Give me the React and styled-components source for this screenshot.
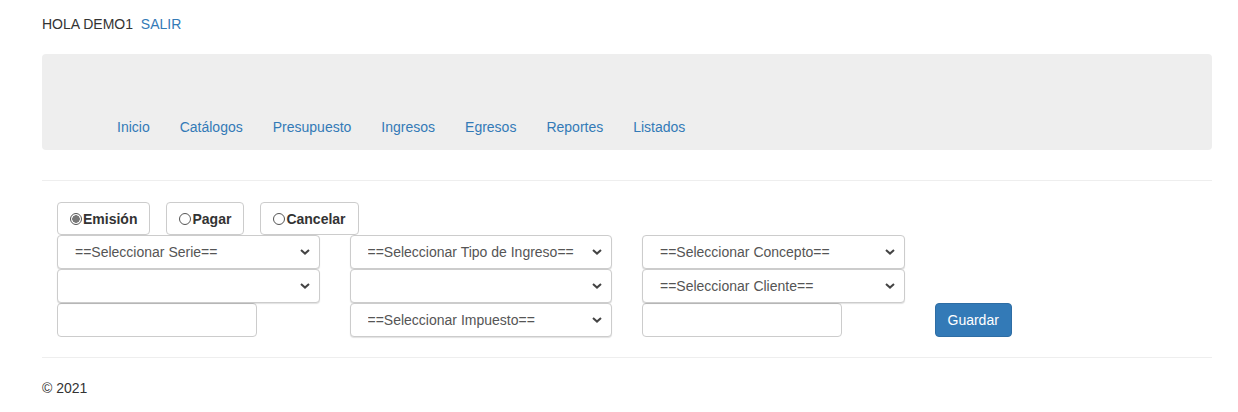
import styled, { createGlobalStyle } from "styled-components";

const GlobalStyle = createGlobalStyle`
  body {
    margin: 0;
    background: #fff;
    font-family: "Liberation Sans", Arial, Helvetica, sans-serif;
    font-size: 14px;
    line-height: 20px;
    color: #333;
  }
  a {
    color: #337ab7;
    text-decoration: none;
  }
`;

const navItems = ["Inicio", "Catálogos", "Presupuesto", "Ingresos", "Egresos", "Reportes", "Listados"];

function Chevron() {
  return (
    <ChevronIcon width="10" height="6" viewBox="0 0 10 6">
      <path d="M1 1l4 3.6L9 1" fill="none" stroke="#444" strokeWidth="2" />
    </ChevronIcon>
  );
}

function Select({ placeholder }) {
  return (
    <SelectWrap>
      <SelectBox defaultValue="">
        <option value="">{placeholder || ""}</option>
      </SelectBox>
      <Chevron />
    </SelectWrap>
  );
}

function App() {
  return (
    <>
      <GlobalStyle />
      <Container>
        <Greeting>
          HOLA DEMO1&nbsp; <a href="/">SALIR</a>
        </Greeting>

        <Navbar>
          <NavList>
            {navItems.map((item) => (
              <li key={item}>
                <a href="/">{item}</a>
              </li>
            ))}
          </NavList>
        </Navbar>

        <Rule />

        <Form>
          <RadioRow>
            <RadioButton>
              <RadioDot $checked />Emisión
            </RadioButton>
            <RadioButton>
              <RadioDot />Pagar
            </RadioButton>
            <RadioButton>
              <RadioDot />Cancelar
            </RadioButton>
          </RadioRow>

          <FieldGrid>
            <Select placeholder="==Seleccionar Serie==" />
            <Select placeholder="==Seleccionar Tipo de Ingreso==" />
            <Select placeholder="==Seleccionar Concepto==" />
            <span />

            <Select />
            <Select />
            <Select placeholder="==Seleccionar Cliente==" />
            <span />

            <TextInput type="text" />
            <Select placeholder="==Seleccionar Impuesto==" />
            <TextInput type="text" />
            <SaveButton type="button">Guardar</SaveButton>
          </FieldGrid>
        </Form>

        <FooterRule />
        <Footer>© 2021</Footer>
      </Container>
    </>
  );
}

export default App;

const Container = styled.div`
  width: 1170px;
  margin-left: 42px;
`;

const Greeting = styled.div`
  padding-top: 14px;
  line-height: 20px;
`;

const Navbar = styled.nav`
  margin-top: 20px;
  height: 96px;
  background: #eee;
  border-radius: 4px;
  box-sizing: border-box;
  padding-top: 48px;
`;

const NavList = styled.ul`
  display: flex;
  list-style: none;
  margin: 0;
  padding: 0 0 0 60px;
  li a {
    display: block;
    padding: 15px 15px 13px;
    line-height: 20px;
    color: #337ab7;
  }
`;

const Rule = styled.hr`
  margin: 30px 0 0;
  border: 0;
  border-top: 1px solid #eee;
`;

const Form = styled.form`
  padding: 21px 15px 0;
`;

const RadioRow = styled.div`
  display: flex;
  gap: 16px;
`;

const RadioButton = styled.label`
  display: inline-flex;
  align-items: center;
  height: 33px;
  box-sizing: border-box;
  padding: 1px 12px 0;
  border: 1px solid #ccc;
  border-radius: 4px;
  font-weight: bold;
  color: #333;
  background: #fff;
`;

const RadioDot = styled.span`
  width: 12px;
  height: 12px;
  box-sizing: border-box;
  border-radius: 50%;
  border: 1px solid #555;
  margin-right: 1px;
  background: ${(p) => (p.$checked ? "radial-gradient(circle, #777 0 3.5px, #fff 4px)" : "#fff")};
`;

const FieldGrid = styled.div`
  display: grid;
  grid-template-columns: repeat(4, 262.5px);
  grid-auto-rows: 34px;
  column-gap: 30px;
`;

const SelectWrap = styled.div`
  position: relative;
  height: 34px;
`;

const SelectBox = styled.select`
  appearance: none;
  width: 100%;
  height: 34px;
  box-sizing: border-box;
  padding: 0 30px 0 17px;
  border: 1px solid #ccc;
  border-radius: 4px;
  background: #fff;
  box-shadow: 0 1px 1px rgba(0, 0, 0, 0.12);
  font-family: "Liberation Sans", Arial, sans-serif;
  font-size: 14px;
  color: #555;
`;

const ChevronIcon = styled.svg`
  position: absolute;
  right: 10px;
  top: 14px;
  pointer-events: none;
`;

const TextInput = styled.input`
  width: 200px;
  height: 34px;
  box-sizing: border-box;
  border: 1px solid #ccc;
  border-radius: 4px;
  padding: 6px 12px;
  font-family: "Liberation Sans", Arial, sans-serif;
  font-size: 14px;
`;

const SaveButton = styled.button`
  justify-self: start;
  height: 34px;
  padding: 0 12px;
  border: 1px solid #2e6da4;
  border-radius: 4px;
  background: #337ab7;
  color: #fff;
  font-family: "Liberation Sans", Arial, sans-serif;
  font-size: 14px;
`;

const FooterRule = styled.hr`
  margin: 20px 0 0;
  border: 0;
  border-top: 1px solid #eee;
`;

const Footer = styled.footer`
  padding-top: 20px;
  line-height: 20px;
`;
